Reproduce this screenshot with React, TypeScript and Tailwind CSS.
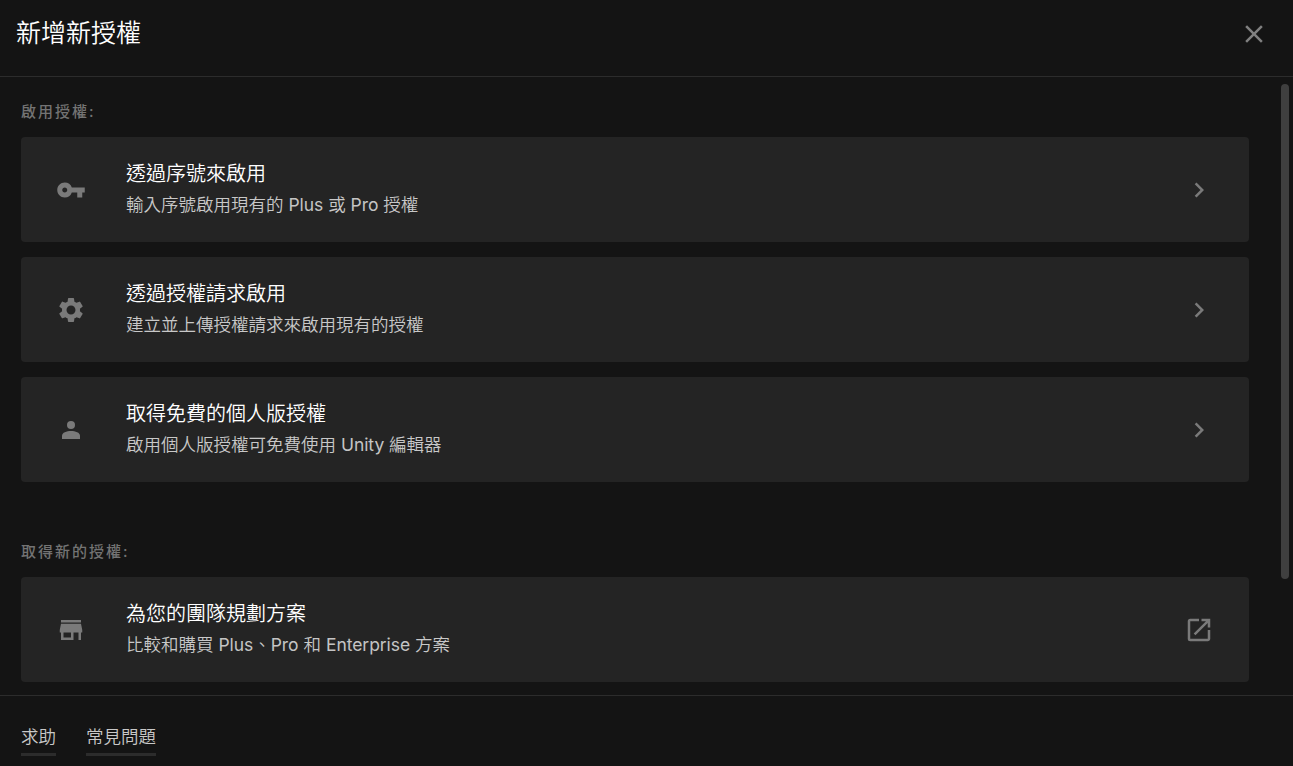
import type { ReactNode } from "react";
import { MdVpnKey, MdSettings, MdStore, MdClose, MdChevronRight, MdOpenInNew } from "react-icons/md";

type Item = { icon: ReactNode; title: string; text: string; external?: boolean };

function PersonIcon() {
  return (
    <svg width="30" height="30" viewBox="0 0 30 30" fill="currentColor">
      <circle cx="15" cy="10" r="4" />
      <path d="M6 24v-3.2c0-3.2 4.6-4.8 9-4.8s9 1.6 9 4.8V24z" />
    </svg>
  );
}

const activate: Item[] = [
  { icon: <MdVpnKey size={30} />, title: "透過序號來啟用", text: "輸入序號啟用現有的 Plus 或 Pro 授權" },
  { icon: <MdSettings size={30} />, title: "透過授權請求啟用", text: "建立並上傳授權請求來啟用現有的授權" },
  { icon: <PersonIcon />, title: "取得免費的個人版授權", text: "啟用個人版授權可免費使用 Unity 編輯器" },
];

const plans: Item[] = [
  { icon: <MdStore size={30} />, title: "為您的團隊規劃方案", text: "比較和購買 Plus、Pro 和 Enterprise 方案", external: true },
];

function Card({ icon, title, text, external }: Item) {
  return (
    <button className="flex h-[105px] w-full shrink-0 items-center rounded bg-[#242424] text-left">
      <span className="flex w-[100px] shrink-0 justify-center pt-px text-[#7a7a7a]">{icon}</span>
      <span className="flex grow flex-col pl-[5px]">
        <span className="h-[30px] text-[20px] leading-[31px] font-[350] text-white">{title}</span>
        <span className="h-[32px] text-[17.5px] leading-[31px] font-[350] text-[#c8c8c8]">
          {text.split(/([A-Za-z]+)/).map((part, i) =>
            i % 2 ? <span key={i} className="font-normal tracking-[-0.05px] text-[#c4c4c4]">{part}</span> : part
          )}
        </span>
      </span>
      <span className="flex w-[100px] shrink-0 justify-center pt-px text-[#7a7a7a]">
        {external ? <MdOpenInNew size={30} /> : <MdChevronRight size={30} />}
      </span>
    </button>
  );
}

function Section({ label, items }: { label: string; items: Item[] }) {
  return (
    <section>
      <h2 className="mb-3 h-6 text-[15px] leading-[21px] font-medium tracking-[2px] text-[#737373]">{label}</h2>
      <div className="flex flex-col gap-[15px]">
        {items.map((item) => (
          <Card key={item.title} {...item} />
        ))}
      </div>
    </section>
  );
}

export default function App() {
  return (
    <div className="flex h-[766px] w-[1293px] flex-col overflow-hidden bg-[#141414] font-['Inter','Noto_Sans_CJK_TC',sans-serif]">
      <header className="flex h-[77px] shrink-0 items-start justify-between border-b border-[#2c2c2c] pt-4 pr-6 pl-4">
        <h1 className="text-[25px] leading-[34px] font-[350] text-white">新增新授權</h1>
        <button aria-label="關閉" className="mt-[3px] text-[#808080]">
          <MdClose size={30} />
        </button>
      </header>
      <main className="flex h-[618px] shrink-0 overflow-hidden">
        <div className="flex w-[1249px] flex-col gap-[59px] pt-6 pl-[21px]">
          <Section label="啟用授權:" items={activate} />
          <Section label="取得新的授權:" items={plans} />
        </div>
        <div className="mt-[7px] ml-8 h-[495px] w-2 rounded-full bg-[#3f3f3f]" />
      </main>
      <footer className="flex grow gap-[30px] border-t border-[#2c2c2c] pt-[26px] pl-[21px] text-[17.5px] font-[350] text-[#c8c8c8]">
        <a className="h-[34px] border-b-3 border-[#2c2c2c] leading-[30px]">求助</a>
        <a className="h-[34px] border-b-3 border-[#2c2c2c] leading-[30px]">常見問題</a>
      </footer>
    </div>
  );
}
